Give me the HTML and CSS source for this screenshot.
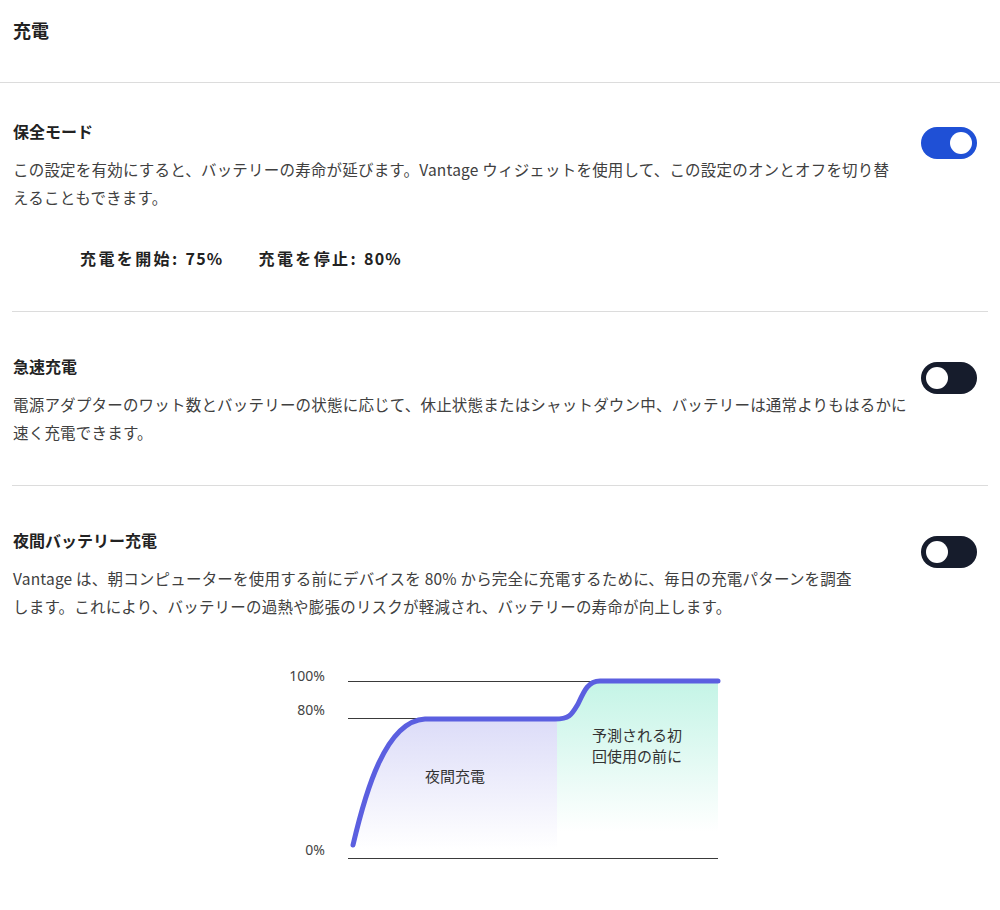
FILE: index.html
```html
<!DOCTYPE html>
<html lang="ja">
<head>
<meta charset="utf-8">
<title>充電</title>
<link rel="stylesheet" href="styles.css">
</head>
<body>
<header class="page-header">
  <h1 class="page-title">充電</h1>
</header>
<main class="settings">
  <section class="setting first">
    <div class="setting-text">
      <h2 class="setting-title">保全モード</h2>
      <p class="setting-desc">この設定を有効にすると、バッテリーの寿命が延びます。Vantage ウィジェットを使用して、この設定のオンとオフを切り替<br>えることもできます。</p>
      <div class="limits">
        <span class="limit"><b>充電を開始:</b> <span class="val">75%</span></span>
        <span class="limit"><b>充電を停止:</b> <span class="val">80%</span></span>
      </div>
    </div>
    <div class="toggle on"><span class="knob"></span></div>
  </section>
  <section class="setting">
    <div class="setting-text">
      <h2 class="setting-title">急速充電</h2>
      <p class="setting-desc">電源アダプターのワット数とバッテリーの状態に応じて、休止状態またはシャットダウン中、バッテリーは通常よりもはるかに<br>速く充電できます。</p>
    </div>
    <div class="toggle"><span class="knob"></span></div>
  </section>
  <section class="setting last">
    <div class="setting-text">
      <h2 class="setting-title">夜間バッテリー充電</h2>
      <p class="setting-desc">Vantage は、朝コンピューターを使用する前にデバイスを 80% から完全に充電するために、毎日の充電パターンを調査<br>します。これにより、バッテリーの過熱や膨張のリスクが軽減され、バッテリーの寿命が向上します。</p>
    </div>
    <div class="toggle"><span class="knob"></span></div>
  </section>
  <div class="chart-wrap">
    <svg class="chart" width="460" height="220" viewBox="0 0 460 220" font-family="Noto Sans, Noto Sans CJK JP, sans-serif">
      <defs>
        <linearGradient id="gl" x1="0" y1="0" x2="0" y2="1">
          <stop offset="0" stop-color="#dcdcf8"/>
          <stop offset="1" stop-color="#ffffff"/>
        </linearGradient>
        <linearGradient id="gr" x1="0" y1="0" x2="0" y2="1">
          <stop offset="0" stop-color="#c4f4e6"/>
          <stop offset="0.9" stop-color="#ffffff"/>
        </linearGradient>
      </defs>
      <path d="M287,60 C300,60 302,55 308,45 C314,32 318,22 330,22 L448,22 L448,190 L287,190 Z" fill="url(#gr)"/>
      <path d="M83,186 C95,135 115,62 155,60 L287,60 L287,190 L83,190 Z" fill="url(#gl)"/>
      <line x1="78" y1="22.5" x2="448" y2="22.5" class="axis"/>
      <line x1="78" y1="59.5" x2="160" y2="59.5" class="axis"/>
      <line x1="78" y1="199.5" x2="448" y2="199.5" class="axis"/>
      <path d="M83,186 C95,135 115,62 155,60 L285,60 C300,60 302,55 308,45 C314,32 318,22 330,22 L448,22" class="curve"/>
      <text x="55" y="22" class="tick">100%</text>
      <text x="55" y="56" class="tick">80%</text>
      <text x="55" y="196" class="tick">0%</text>
      <text x="185" y="123" class="area-label">夜間充電</text>
      <text x="367" y="82" class="area-label">予測される初</text>
      <text x="367" y="103" class="area-label">回使用の前に</text>
    </svg>
  </div>
</main>
</body>
</html>
```
FILE: styles.css
```css
* { box-sizing: border-box; }

html, body {
  margin: 0;
  padding: 0;
  background: #ffffff;
}

body {
  font-family: "Noto Sans CJK JP", "Noto Sans", sans-serif;
  color: #222;
  width: 1000px;
  height: 910px;
  overflow: hidden;
}

.page-header {
  padding: 18px 13px 0;
  height: 83px;
  border-bottom: 1px solid #dcdcdc;
}

.page-title {
  margin: 0;
  font-size: 18px;
  line-height: 24px;
  font-weight: 700;
  color: #222;
}

.setting {
  margin: 0 12px;
  display: grid;
  grid-template-columns: 1fr auto;
  column-gap: 10px;
  padding: 43px 11px 39px 1px;
  border-bottom: 1px solid #dcdcdc;
}

.setting.first {
  padding-top: 37px;
}

.setting.last {
  border-bottom: none;
}

.setting-title {
  margin: 0;
  font-size: 16px;
  line-height: 22px;
  font-weight: 700;
  color: #222;
}

.setting-desc {
  margin: 13px 0 0;
  font-size: 15.5px;
  line-height: 28px;
  letter-spacing: 0.2px;
  color: #404040;
  white-space: nowrap;
}

.limits {
  margin-top: 33px;
  padding-left: 67px;
  display: flex;
  gap: 35px;
  font-size: 16px;
  line-height: 28px;
  letter-spacing: 2.4px;
  color: #222;
}

.limit b {
  font-weight: 700;
}

.limit .val {
  font-weight: 600;
  letter-spacing: 1.2px;
}

.toggle {
  margin-top: 7px;
  width: 56px;
  height: 32px;
  border-radius: 16px;
  background: #161c2c;
  display: flex;
  align-items: center;
  padding: 0 5px;
  justify-content: flex-start;
}

.toggle .knob {
  width: 22px;
  height: 22px;
  border-radius: 50%;
  background: #ffffff;
}

.toggle.on {
  background: #1f50d6;
  justify-content: flex-end;
}

.chart-wrap {
  display: flex;
  justify-content: center;
}

.chart {
  display: block;
}

.chart .axis {
  stroke: #3a3a3a;
  stroke-width: 1;
}

.chart .curve {
  fill: none;
  stroke: #5b5fe0;
  stroke-width: 5;
  stroke-linecap: round;
  stroke-linejoin: round;
}

.chart text {
  font-family: "Noto Sans", "Noto Sans CJK JP", sans-serif;
}

.chart .tick {
  font-size: 14px;
  fill: #444;
  text-anchor: end;
}

.chart .area-label {
  font-family: "Noto Sans CJK JP", "Noto Sans", sans-serif;
  font-size: 15px;
  fill: #333;
  text-anchor: middle;
}
```
